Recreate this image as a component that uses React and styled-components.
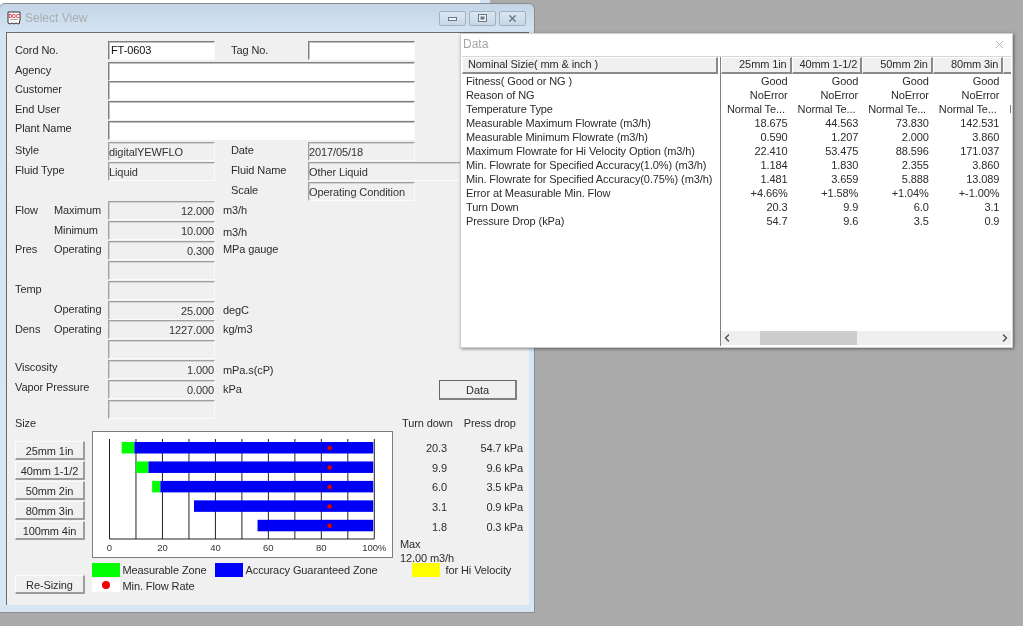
import React from 'react';
import styled, { createGlobalStyle } from 'styled-components';
import { ChevronLeft, ChevronRight, X } from 'lucide-react';

const SIZES = ['25mm 1in', '40mm 1-1/2', '50mm 2in', '80mm 3in', '100mm 4in'];

const BARS = [
  { green: 4.6, blue: 9.4 },
  { green: 10, blue: 14.7 },
  { green: 16.1, blue: 19.2 },
  { blue: 31.9 },
  { blue: 55.9 },
];

const DROPS = [
  ['20.3', '54.7 kPa'],
  ['9.9', '9.6 kPa'],
  ['6.0', '3.5 kPa'],
  ['3.1', '0.9 kPa'],
  ['1.8', '0.3 kPa'],
];

const DATA_ROWS = [
  ['Fitness( Good or NG )', 'Good', 'Good', 'Good', 'Good'],
  ['Reason of NG', 'NoError', 'NoError', 'NoError', 'NoError'],
  ['Temperature Type', 'Normal Te...', 'Normal Te...', 'Normal Te...', 'Normal Te...', 'N'],
  ['Measurable Maximum Flowrate (m3/h)', '18.675', '44.563', '73.830', '142.531'],
  ['Measurable Minimum Flowrate (m3/h)', '0.590', '1.207', '2.000', '3.860'],
  ['Maximum Flowrate for Hi Velocity Option (m3/h)', '22.410', '53.475', '88.596', '171.037'],
  ['Min. Flowrate for Specified Accuracy(1.0%) (m3/h)', '1.184', '1.830', '2.355', '3.860'],
  ['Min. Flowrate for Specified Accuracy(0.75%) (m3/h)', '1.481', '3.659', '5.888', '13.089'],
  ['Error at Measurable Min. Flow', '+4.66%', '+1.58%', '+1.04%', '+-1.00%'],
  ['Turn Down', '20.3', '9.9', '6.0', '3.1'],
  ['Pressure Drop (kPa)', '54.7', '9.6', '3.5', '0.9'],
];

const GlobalStyle = createGlobalStyle`
  html, body {
    margin: 0;
    padding: 0;
    background: #ababab;
  }
  body {
    font-family: "Liberation Sans", Arial, sans-serif;
    font-size: 11px;
    letter-spacing: -0.1px;
    color: #2b2b2b;
  }
`;

const Desktop = styled.div`
  position: relative;
  width: 1023px;
  height: 626px;
  overflow: hidden;
  background: #ababab;
  filter: blur(0.3px);
`;

const BackStrip = styled.div`
  position: absolute;
  left: 0;
  top: 0;
  width: 490px;
  height: 5px;
  background: linear-gradient(90deg, #fff 0, #fff 98%, #d4e3f1 98%);
`;

const MainWindow = styled.div`
  position: absolute;
  left: 0;
  top: 3px;
  width: 535px;
  height: 610px;
  box-sizing: border-box;
  display: flex;
  flex-direction: column;
  padding: 0 5px 7px 6px;
  background: linear-gradient(180deg, #c3d5e6 0, #d6e5f2 30px, #d8e6f3 100%);
  border: 1px solid #8a8d90;
  border-left: none;
  border-radius: 5px 6px 0 0;
`;

const TitleBar = styled.div`
  height: 28px;
  flex-shrink: 0;
  display: flex;
  align-items: center;
  padding-left: 1px;
`;

const WindowTitle = styled.span`
  margin-left: 4px;
  font-size: 12px;
  letter-spacing: 0;
  color: #a8adb2;
  flex: 1;
`;

const Controls = styled.div`
  display: flex;
  gap: 3px;
  margin-right: 3px;
  margin-top: 1px;
`;

const ControlButton = styled.div`
  width: 27px;
  height: 15px;
  display: flex;
  align-items: center;
  justify-content: center;
  border: 1px solid #9fb1c2;
  border-radius: 2px;
  box-sizing: border-box;
  background: linear-gradient(180deg, #dbe7f2, #c6d7e6);
  color: #6b7782;
`;

const Client = styled.div`
  flex: 1;
  background: #f0f0f0;
  border-top: 1px solid #6b6b6b;
  border-left: 1px solid #6b6b6b;
  padding: 8px 0 0 8px;
  min-height: 0;
`;

const Row = styled.div`
  display: flex;
  align-items: center;
  height: 19px;
  margin-top: ${p => p.$gap ?? 1}px;
`;

const Label = styled.span`
  flex-shrink: 0;
  width: ${p => p.$w}px;
  margin-left: ${p => p.$ml || 0}px;
  position: relative;
  top: ${p => -(p.$raise || 0)}px;
  white-space: nowrap;
`;

const Field = styled.div`
  flex-shrink: 0;
  box-sizing: border-box;
  height: 19px;
  width: ${p => p.$w || 107}px;
  line-height: ${p => (p.$white ? 17 : 19)}px;
  padding: ${p => (p.$white ? '0 2px' : '0')};
  text-align: ${p => (p.$num ? 'right' : 'left')};
  white-space: nowrap;
  overflow: hidden;
  background: ${p => (p.$white ? '#fff' : '#f0f0f0')};
  border-style: solid;
  border-width: 1px;
  border-color: ${p => (p.$white ? '#808080 #fdfdfd #fdfdfd #808080' : '#a0a0a0 #fbfbfb #fbfbfb #a0a0a0')};
  box-shadow: inset 1px 1px 0 ${p => (p.$white ? '#c0c0c0' : '#d2d2d2')};
  color: ${p => (p.$white ? '#111' : '#333')};
`;

const Unit = styled.span`
  margin-left: 8px;
  position: relative;
  top: ${p => -(p.$raise || 0)}px;
  white-space: nowrap;
`;

const PushButton = styled.button`
  display: block;
  box-sizing: border-box;
  width: ${p => p.$w || 70}px;
  height: 19px;
  padding: 1px 0 0;
  font: inherit;
  letter-spacing: inherit;
  color: #2b2b2b;
  background: #f0f0f0;
  border-style: solid;
  border-width: 1px 2px 2px 1px;
  border-color: #fbfbfb #9c9c9c #9c9c9c #fbfbfb;
  margin-top: ${p => p.$mt ?? 1}px;
`;

const DataButton = styled(PushButton)`
  margin: 0 12px 0 auto;
  height: 20px;
  align-self: flex-start;
  border-color: #666 #808080 #808080 #666;
`;

const Bottom = styled.div`
  display: grid;
  grid-template-columns: 77px 308px 1fr;
  grid-template-rows: 144px auto;
  margin-top: -1px;
`;

const SizeHead = styled.div`
  height: 10px;
  line-height: 10px;
  margin-bottom: 13px;
`;

const ChartBox = styled.div`
  box-sizing: border-box;
  margin-top: 13px;
  width: 300.5px;
  height: 127px;
  border: 1px solid #7d7d7d;
  background: #fff;
`;

const TurnPanel = styled.div`
  white-space: nowrap;
`;

const TurnHead = styled.div`
  display: flex;
  height: 10px;
  line-height: 10px;
  padding-left: 2px;
  gap: 11px;
  margin-bottom: 10px;
`;

const TurnGrid = styled.div`
  display: grid;
  grid-template-columns: 47px 76px;
  grid-auto-rows: 19.75px;
  align-items: center;
  justify-items: end;
`;

const MaxLine = styled.div`
  height: 14px;
  line-height: 14px;
`;

const Legend = styled.div`
  grid-column: 2 / 4;
  display: grid;
  grid-template-columns: 27.5px 89.5px 27.5px 163.5px 27.5px auto;
  column-gap: 3px;
  grid-auto-rows: 14.5px;
  align-items: center;
  margin-top: 1px;
  white-space: nowrap;
`;

const LegendText = styled.span`
  margin-left: ${p => p.$ml || 0}px;
  padding-top: ${p => p.$pt || 0}px;
`;

const Swatch = styled.div`
  height: 14px;
  background: ${p => p.$color};
  display: flex;
  align-items: center;
  justify-content: center;
`;

const Dot = styled.div`
  width: 8px;
  height: 8px;
  border-radius: 50%;
  background: #f00000;
`;

const DataWindow = styled.div`
  position: absolute;
  left: 460px;
  top: 33px;
  width: 553px;
  height: 315px;
  box-sizing: border-box;
  display: flex;
  flex-direction: column;
  background: #fff;
  border: 1px solid #d0d0d0;
  box-shadow: 1px 1px 3px rgba(0, 0, 0, 0.45);
`;

const DataTitle = styled.div`
  height: 22px;
  flex-shrink: 0;
  display: flex;
  align-items: center;
  justify-content: space-between;
  padding: 0 6px 2px 2px;
  box-sizing: border-box;
  font-size: 12px;
  letter-spacing: 0;
  color: #a4a4a4;
`;

const DataBody = styled.div`
  flex: 1;
  min-height: 0;
  display: flex;
  border-top: 1px solid #d8d8d8;
  margin: 0 1px 1px 1px;
`;

const LeftPane = styled.div`
  box-sizing: border-box;
  width: 259px;
  flex-shrink: 0;
  border-right: 1px solid #808080;
`;

const LeftHead = styled.div`
  box-sizing: border-box;
  width: 256px;
  height: 16.5px;
  line-height: 13px;
  padding-left: 5px;
  background: #f0f0f0;
  border-style: solid;
  border-width: 1px 2px 2px 1px;
  border-color: #fff #8a8a8a #8a8a8a #fff;
  white-space: nowrap;
`;

const RightPane = styled.div`
  flex: 1;
  min-width: 0;
  display: flex;
  flex-direction: column;
  overflow: hidden;
`;

const Columns = styled.div`
  flex: 1;
  min-height: 0;
  overflow: hidden;
  display: grid;
  grid-template-columns: repeat(5, 70.6px);
  grid-template-rows: 16.5px;
  grid-auto-rows: 14.1px;
  align-content: start;
`;

const HeadCell = styled.div`
  box-sizing: border-box;
  height: 16.5px;
  line-height: 13px;
  padding-right: 3px;
  text-align: right;
  background: #f0f0f0;
  border-style: solid;
  border-width: 1px 2px 2px 1px;
  border-color: #fff #8a8a8a #8a8a8a #fff;
  white-space: nowrap;
`;

const NameCell = styled.div`
  height: 14.1px;
  line-height: 14.1px;
  padding-left: 4px;
  white-space: nowrap;
`;

const ValueCell = styled.div`
  box-sizing: border-box;
  height: 14.1px;
  line-height: 14.1px;
  padding: ${p => (p.$left ? '0 0 0 6px' : '0 4px 0 0')};
  text-align: ${p => (p.$left ? 'left' : 'right')};
  white-space: nowrap;
`;

const ScrollBar = styled.div`
  flex-shrink: 0;
  height: 14px;
  margin-bottom: 1px;
  display: flex;
  align-items: center;
  justify-content: space-between;
  background: #efefef;
  color: #555;
  position: relative;
`;

const ScrollThumb = styled.div`
  position: absolute;
  left: 39px;
  width: 97px;
  top: 0;
  bottom: 0;
  background: #cdcdcd;
`;

const ChartText = styled.text`
  font-family: "Liberation Sans", Arial, sans-serif;
  font-size: 9.5px;
  letter-spacing: 0;
  fill: #333;
  text-anchor: middle;
`;

const X0 = 16.5;
const X100 = 281.3;
const px = pct => X0 + ((X100 - X0) * pct) / 100;

const FlowChart = () => (
  <svg width="298.5" height="125" style={{ display: 'block' }}>
    {[0, 10, 20, 30, 40, 50, 60, 70, 80, 90, 100].map(t => (
      <line key={t} x1={px(t)} x2={px(t)} y1="7" y2="107" stroke="#222" strokeWidth="1" />
    ))}
    <line x1={X0} x2={X100} y1="107" y2="107" stroke="#222" strokeWidth="1" />
    {BARS.map((bar, i) => {
      const y = 10 + i * 19.45;
      return (
        <g key={i}>
          {bar.green && <rect x={px(bar.green)} y={y} width={px(bar.blue) - px(bar.green)} height="11.5" fill="#00ff00" />}
          <rect x={px(bar.blue)} y={y} width={px(99.6) - px(bar.blue)} height="11.5" fill="#0000f5" />
          <circle cx={px(83.1)} cy={y + 6} r="2.2" fill="#f00000" stroke="#800020" strokeWidth="0.5" />
        </g>
      );
    })}
    {[0, 20, 40, 60, 80].map(t => (
      <ChartText key={t} x={px(t)} y="119">{t}</ChartText>
    ))}
    <ChartText x={px(100)} y="119">100%</ChartText>
  </svg>
);

const DocIcon = () => (
  <svg width="14" height="14" viewBox="0 0 14 14">
    <path d="M1 1h12v9l-1 1 1 1-2 1-2-1-2 1-2-1-2 1-2-1z" fill="#fff" stroke="#333" strokeWidth="1" />
    <text x="7" y="6.5" fontFamily="Liberation Sans" fontSize="5" fontWeight="700" fill="#d81e28" textAnchor="middle" letterSpacing="0">DOC</text>
    <rect x="3" y="8" width="8" height="1" fill="#aaa" />
  </svg>
);

export default function App() {
  return (
    <Desktop>
      <GlobalStyle />
      <BackStrip />
      <MainWindow>
        <TitleBar>
          <DocIcon />
          <WindowTitle>Select View</WindowTitle>
          <Controls>
            <ControlButton>
              <svg width="11" height="6"><rect x="1.5" y="1.5" width="8" height="3" fill="#eef3f8" stroke="#6b7782" /></svg>
            </ControlButton>
            <ControlButton>
              <svg width="11" height="9"><rect x="1.5" y="0.5" width="8" height="7" fill="#eef3f8" stroke="#6b7782" /><rect x="3.5" y="2.5" width="4" height="3" fill="#6b7782" /></svg>
            </ControlButton>
            <ControlButton><X size={11} strokeWidth={3} /></ControlButton>
          </Controls>
        </TitleBar>
        <Client>
          <Row $gap={0}>
            <Label $w={93} $raise={1}>Cord No.</Label>
            <Field $white>FT-0603</Field>
            <Label $w={77} $ml={16} $raise={1}>Tag No.</Label>
            <Field $white />
          </Row>
          <Row $gap={2}>
            <Label $w={93} $raise={2}>Agency</Label>
            <Field $white $w={307} />
          </Row>
          <Row $gap={0}>
            <Label $w={93} $raise={2}>Customer</Label>
            <Field $white $w={307} />
          </Row>
          <Row>
            <Label $w={93} $raise={2}>End User</Label>
            <Field $white $w={307} />
          </Row>
          <Row>
            <Label $w={93} $raise={3}>Plant Name</Label>
            <Field $white $w={307} />
          </Row>
          <Row $gap={2}>
            <Label $w={93} $raise={2}>Style</Label>
            <Field>digitalYEWFLO</Field>
            <Label $w={77} $ml={16} $raise={2}>Date</Label>
            <Field>2017/05/18</Field>
          </Row>
          <Row>
            <Label $w={93} $raise={2}>Fluid Type</Label>
            <Field>Liquid</Field>
            <Label $w={77} $ml={16} $raise={2}>Fluid Name</Label>
            <Field $w={170}>Other Liquid</Field>
          </Row>
          <Row>
            <Label $w={216} />
            <Label $w={77} $raise={2}>Scale</Label>
            <Field>Operating Condition</Field>
          </Row>
          <Row $gap={0}>
            <Label $w={39} $raise={1}>Flow</Label>
            <Label $w={54} $raise={1}>Maximum</Label>
            <Field $num>12.000</Field>
            <Unit $raise={1}>m3/h</Unit>
          </Row>
          <Row>
            <Label $w={39} />
            <Label $w={54} $raise={1}>Minimum</Label>
            <Field $num>10.000</Field>
            <Unit $raise={-1}>m3/h</Unit>
          </Row>
          <Row>
            <Label $w={39} $raise={2}>Pres</Label>
            <Label $w={54} $raise={2}>Operating</Label>
            <Field $num>0.300</Field>
            <Unit $raise={2}>MPa gauge</Unit>
          </Row>
          <Row>
            <Label $w={93} />
            <Field />
          </Row>
          <Row>
            <Label $w={93} $raise={2}>Temp</Label>
            <Field />
          </Row>
          <Row>
            <Label $w={39} />
            <Label $w={54} $raise={2}>Operating</Label>
            <Field $num>25.000</Field>
            <Unit $raise={1}>degC</Unit>
          </Row>
          <Row $gap={0}>
            <Label $w={39} $raise={1}>Dens</Label>
            <Label $w={54} $raise={1}>Operating</Label>
            <Field $num>1227.000</Field>
            <Unit $raise={1}>kg/m3</Unit>
          </Row>
          <Row>
            <Label $w={93} />
            <Field />
          </Row>
          <Row>
            <Label $w={93} $raise={3}>Viscosity</Label>
            <Field $num>1.000</Field>
            <Unit>mPa.s(cP)</Unit>
          </Row>
          <Row>
            <Label $w={93} $raise={3}>Vapor Pressure</Label>
            <Field $num>0.000</Field>
            <Unit $raise={1}>kPa</Unit>
            <DataButton $w={78}>Data</DataButton>
          </Row>
          <Row>
            <Label $w={93} />
            <Field />
          </Row>
          <Bottom>
            <div>
              <SizeHead>Size</SizeHead>
              {SIZES.map(size => <PushButton key={size}>{size}</PushButton>)}
            </div>
            <ChartBox><FlowChart /></ChartBox>
            <TurnPanel>
              <TurnHead><span>Turn down</span><span>Press drop</span></TurnHead>
              <TurnGrid>
                {DROPS.flat().map((v, i) => <span key={i}>{v}</span>)}
              </TurnGrid>
              <MaxLine>Max</MaxLine>
              <MaxLine>12.00 m3/h</MaxLine>
            </TurnPanel>
            <PushButton $mt={13}>Re-Sizing</PushButton>
            <Legend>
              <Swatch $color="#00ff00" />
              <LegendText>Measurable Zone</LegendText>
              <Swatch $color="#0000ff" />
              <LegendText>Accuracy Guaranteed Zone</LegendText>
              <Swatch $color="#ffff00" />
              <LegendText $ml={3}>for Hi Velocity</LegendText>
              <Swatch $color="#ffffff"><Dot /></Swatch>
              <LegendText $pt={3}>Min. Flow Rate</LegendText>
            </Legend>
          </Bottom>
        </Client>
      </MainWindow>
      <DataWindow>
        <DataTitle>
          Data
          <X size={13} color="#8f8f8f" strokeWidth={1.2} />
        </DataTitle>
        <DataBody>
          <LeftPane>
            <LeftHead>Nominal Sizie( mm &amp; inch )</LeftHead>
            {DATA_ROWS.map(row => <NameCell key={row[0]}>{row[0]}</NameCell>)}
          </LeftPane>
          <RightPane>
            <Columns>
              {SIZES.slice(0, 4).map(size => <HeadCell key={size}>{size}</HeadCell>)}
              <HeadCell />
              {DATA_ROWS.map(row => [0, 1, 2, 3, 4].map(i => (
                <ValueCell key={row[0] + i} $left={row[0] === 'Temperature Type'}>{row[i + 1]}</ValueCell>
              )))}
            </Columns>
            <ScrollBar>
              <ChevronLeft size={12} strokeWidth={3} />
              <ScrollThumb />
              <ChevronRight size={12} strokeWidth={3} />
            </ScrollBar>
          </RightPane>
        </DataBody>
      </DataWindow>
    </Desktop>
  );
}
